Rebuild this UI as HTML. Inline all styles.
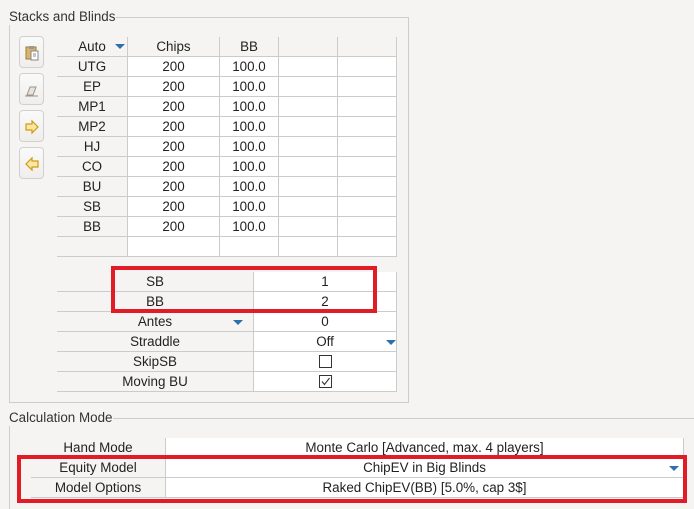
<!DOCTYPE html>
<html style="overflow:hidden;width:694px;height:509px"><head><style>
*{box-sizing:border-box;margin:0;padding:0}
body{width:694px;height:509px;background:#f5f4f2;font-family:"Liberation Sans","DejaVu Sans",sans-serif;font-size:13.4px;color:#222;position:relative;overflow:hidden}
.grp{position:absolute;border:1px solid #cfcdca}
.title{position:absolute;background:#f5f4f2;color:#333;font-size:13.4px;padding-right:1px;line-height:16px;z-index:2}
.c{position:absolute;text-align:center;line-height:20px;height:20px;border-right:1px solid #cbcbcb;border-bottom:1px solid #cbcbcb;z-index:1}
.g{background:#f5f4f2}
.w{background:#fff}
.btn{position:absolute;left:19px;width:25px;height:32px;border:1px solid #d2d0cd;border-radius:4px;background:linear-gradient(#fafafa,#efeeec)}
.btn svg{position:absolute;left:4px;top:8px}
.red{position:absolute;border:4px solid #e21c26;z-index:5}
.tri{display:inline-block;width:0;height:0;border-left:5px solid transparent;border-right:5px solid transparent;border-top:5px solid #2f6fae;position:absolute}
.cb{display:inline-block;width:13px;height:13px;border:1px solid #333;vertical-align:-2px;background:#fff;position:relative}
</style></head><body>
<div class="grp" style="left:9px;top:17px;width:400px;height:386px"></div>
<div class="title" style="left:9px;top:9px">Stacks and Blinds</div>

<div class="btn" style="top:36px"><svg width="16" height="16"><rect x="2" y="2" width="10" height="12" fill="#d9b46d" stroke="#a07b3a"/><rect x="5" y="1" width="5" height="3" fill="#999"/><rect x="7" y="6" width="7" height="9" fill="#fff" stroke="#888"/><path d="M9 9h3M9 11h3" stroke="#888"/></svg></div>
<div class="btn" style="top:73px"><svg width="16" height="16"><path d="M3 13l3-8h6l-3 8z" fill="#e8e2da" stroke="#9a948c"/><path d="M1 14h13" stroke="#9a948c"/></svg></div>
<div class="btn" style="top:110px"><svg width="16" height="16"><path d="M2 5h6V2l6 6-6 6v-3H2z" fill="#fbe8a8" stroke="#d19a10" stroke-width="1.2"/></svg></div>
<div class="btn" style="top:147px"><svg width="16" height="16"><path d="M14 5H8V2L2 8l6 6v-3h6z" fill="#fbe8a8" stroke="#d19a10" stroke-width="1.2"/></svg></div>

<div class="grp" style="left:9px;top:418px;width:700px;height:100px;border-right:none"></div>
<div class="title" style="left:9px;top:410px">Calculation Mode</div>

<script>
function cell(x,y,w,t,cls,extra){var d=document.createElement('div');d.className='c '+cls;d.style.left=x+'px';d.style.top=y+'px';d.style.width=w+'px';d.innerHTML=t+(extra||'');document.body.appendChild(d);}
var cols=[57,128,220,279,338,397];
var rows=[['Auto','Chips','BB','',''],['UTG','200','100.0','',''],['EP','200','100.0','',''],['MP1','200','100.0','',''],['MP2','200','100.0','',''],['HJ','200','100.0','',''],['CO','200','100.0','',''],['BU','200','100.0','',''],['SB','200','100.0','',''],['BB','200','100.0','',''],['','','','','']];
rows.forEach(function(r,i){for(var j=0;j<5;j++){var cl=(i==0||j==0)?'g':'w';cell(cols[j],37+i*20,cols[j+1]-cols[j],r[j],cl,(i==0&&j==0)?'<span class="tri" style="left:58px;top:7px"></span>':'');}});
var r2=[['SB','1'],['BB','2'],['Antes','0'],['Straddle','Off'],['SkipSB','<span class="cb"></span>'],['Moving BU','<span class="cb"><svg width="11" height="11" style="position:absolute;left:0;top:0"><path d="M2 5.5l2.5 3L9.5 2" fill="none" stroke="#333" stroke-width="1.1"/></svg></span>']];
r2.forEach(function(r,i){cell(57,272+i*20,197,r[0],'g',i==2?'<span class="tri" style="left:176px;top:8px"></span>':'');cell(254,272+i*20,143,r[1],'w',i==3?'<span class="tri" style="left:132px;top:8px"></span>':'');});
var r3=[['Hand Mode','Monte Carlo [Advanced, max. 4 players]'],['Equity Model','ChipEV in Big Blinds'],['Model Options','Raked ChipEV(BB) [5.0%, cap 3$]']];
r3.forEach(function(r,i){cell(31,438+i*20,135,r[0],'g');cell(166,438+i*20,518,r[1],'w',i==1?'<span class="tri" style="left:503px;top:8px"></span>':'');});
function red(x,y,w,h){var d=document.createElement('div');d.className='red';d.style.left=x+'px';d.style.top=y+'px';d.style.width=w+'px';d.style.height=h+'px';document.body.appendChild(d);}
red(111,266,266,47);
red(17,455,670,48);
</script>
</body></html>
